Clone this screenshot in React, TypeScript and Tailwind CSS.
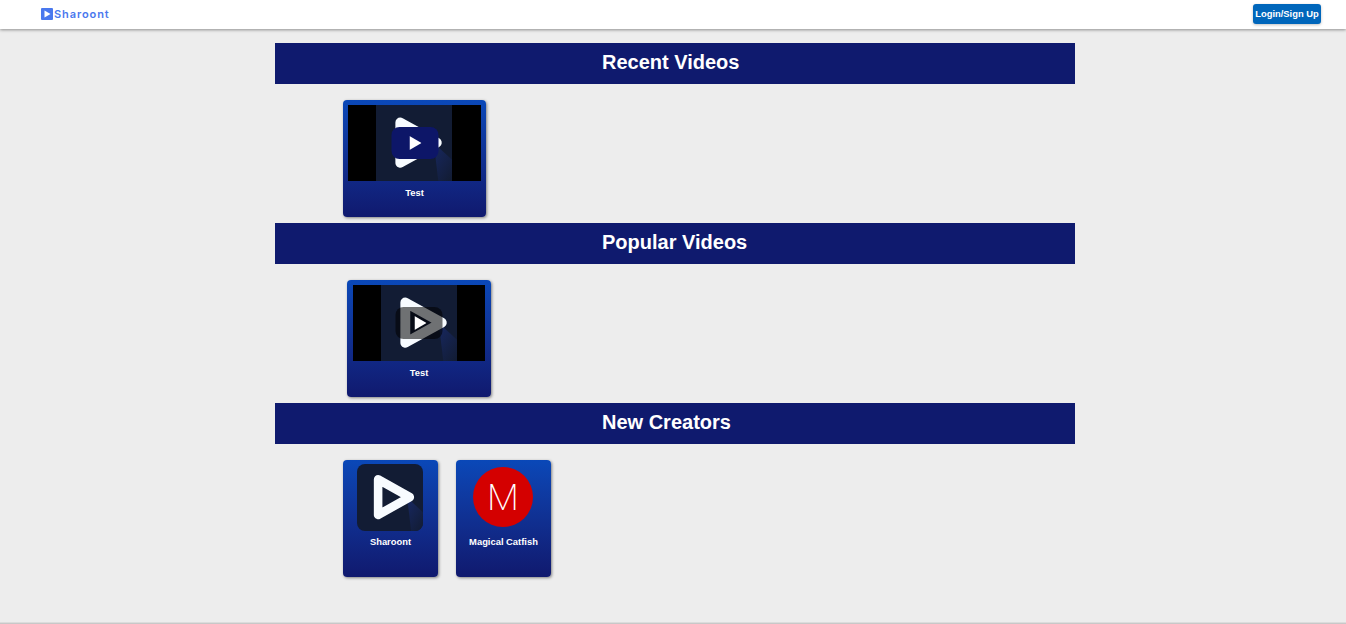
const sans = "font-['Liberation_Sans',Arial,sans-serif]";

function Mark({ id }: { id: string }) {
  return (
    <svg viewBox="0 0 100 100" className="block h-full w-full" preserveAspectRatio="none">
      <defs>
        <linearGradient id={id} x1="0.2" y1="0" x2="0.9" y2="1">
          <stop offset="0" stopColor="#17275e" />
          <stop offset="1" stopColor="#121c34" />
        </linearGradient>
      </defs>
      <rect width="100" height="100" fill="#121c34" />
      <polygon points="76,50 100,72 100,100 82,100" fill={`url(#${id})`} />
      <polygon points="32,23 80,49.5 32,76" fill="#121c34" stroke="#f7fbff" strokeWidth="13" strokeLinejoin="round" />
    </svg>
  );
}

function Heading({ children }: { children: string }) {
  return (
    <div className="h-[41px] w-[800px] bg-[#0f1a6e] pl-[327px] text-[20px] font-bold leading-[38px] text-white">
      {children}
    </div>
  );
}

function VideoCard({ id, width, thumb, inner, overlay }: { id: string; width: string; thumb: string; inner: string; overlay: string }) {
  return (
    <div className={`${width} h-[117px] rounded-[4px] bg-gradient-to-b from-[#0a48b8] to-[#10196e] px-[5px] pt-[5px] shadow-[1px_1px_3px_rgba(0,0,0,0.45)]`}>
      <div className={`${thumb} relative flex h-[76px] justify-center bg-black`}>
        <div className={`h-[76px] w-[76px] ${inner}`}>
          <Mark id={id} />
        </div>
        <div className={`absolute left-1/2 top-[22px] flex h-[32px] w-[47px] -translate-x-1/2 items-center justify-center rounded-[8px] ${overlay}`}>
          <svg className="ml-[2px]" width="12" height="14" viewBox="0 0 12 14">
            <polygon points="0,0 12,7 0,14" fill="#ffffff" />
          </svg>
        </div>
      </div>
      <div className="mt-[7px] text-center text-[9.4px] font-bold leading-[10px] text-white">Test</div>
    </div>
  );
}

export default function App() {
  return (
    <div className={`${sans} flex min-h-[624px] flex-col bg-[#ededed]`}>
      <header className="flex h-[29px] items-center justify-between bg-white pb-[1px] pl-[41px] pr-[25px] shadow-[0_1px_3px_rgba(0,0,0,0.4)]">
        <div className="flex items-center">
          <svg width="12" height="12" viewBox="0 0 12 12">
            <rect width="12" height="12" rx="1" fill="#4a78ee" />
            <polygon points="3.5,2.5 9.5,6 3.5,9.5" fill="#ffffff" />
          </svg>
          <span className="ml-[1px] font-['Inter',sans-serif] text-[11px] font-semibold leading-none tracking-[0.9px] text-[#4a78ee]">Sharoont</span>
        </div>
        <button className="h-[20px] w-[68px] rounded-[3px] bg-[#0066bb] text-[9.4px] font-bold leading-none text-white shadow-[0_1px_3px_rgba(0,0,0,0.25)]">
          Login/Sign Up
        </button>
      </header>

      <main className="ml-[275px] mt-[14px] flex w-[800px] flex-1 flex-col">
        <Heading>Recent Videos</Heading>
        <div className="flex pb-[6px] pl-[68px] pt-[16px]">
          <VideoCard id="a" width="w-[143px]" thumb="w-[133px]" inner="mr-[1px]" overlay="bg-[#0d1668]" />
        </div>
        <Heading>Popular Videos</Heading>
        <div className="flex pb-[6px] pl-[72px] pt-[16px]">
          <VideoCard id="b" width="w-[144px]" thumb="w-[132px] ml-[1px]" inner="" overlay="bg-black/55" />
        </div>
        <Heading>New Creators</Heading>
        <div className="flex gap-[18px] pl-[68px] pt-[16px]">
          <div className="h-[117px] w-[95px] rounded-[4px] bg-gradient-to-b from-[#0a48b8] to-[#10196e] pt-[4px] shadow-[1px_1px_3px_rgba(0,0,0,0.45)]">
            <div className="ml-[14px] h-[67px] w-[66px] overflow-hidden rounded-[8px]">
              <Mark id="c" />
            </div>
            <div className="mt-[6px] text-center text-[9.4px] font-bold leading-[10px] text-white">Sharoont</div>
          </div>
          <div className="h-[117px] w-[95px] rounded-[4px] bg-gradient-to-b from-[#0a48b8] to-[#10196e] pt-[7px] shadow-[1px_1px_3px_rgba(0,0,0,0.45)]">
            <div className="ml-[17px] flex h-[60px] w-[60px] items-center justify-center rounded-full bg-[#d40000] font-['Roboto',sans-serif] text-[37px] font-extralight leading-none text-white">
              M
            </div>
            <div className="mt-[10px] text-center text-[9.4px] font-bold leading-[10px] text-white">Magical Catfish</div>
          </div>
        </div>
      </main>

      <footer className="h-[2px] border-t border-t-[#dcdcdc] bg-[#c8c8c8]" />
    </div>
  );
}
